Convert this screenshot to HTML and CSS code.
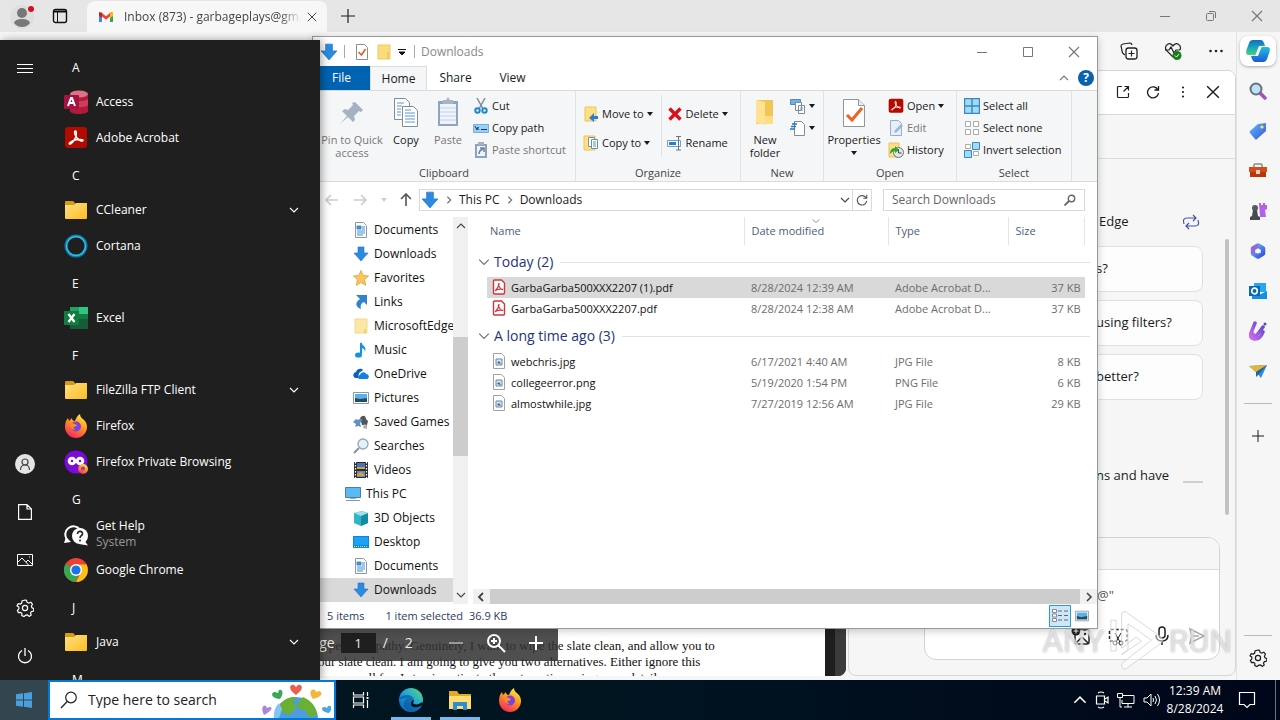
FILE: index.html
```html
<!DOCTYPE html>
<html lang="en">
<head>
<meta charset="utf-8">
<title>Desktop</title>
<link rel="stylesheet" href="styles.css">
</head>
<body>
<svg class="defs" aria-hidden="true">
  <defs>
    <linearGradient id="gFolder" x1="0" y1="0" x2="1" y2="1"><stop offset="0" stop-color="#ffe083"/><stop offset="1" stop-color="#fcbd1f"/></linearGradient>
    <linearGradient id="gFox" x1=".8" y1="0" x2=".3" y2="1"><stop offset="0" stop-color="#fff04a"/><stop offset=".45" stop-color="#ff9a1f"/><stop offset="1" stop-color="#f5245f"/></linearGradient>
    <linearGradient id="gEdge" x1="0" y1="1" x2="1" y2="0"><stop offset="0" stop-color="#0c59a4"/><stop offset=".5" stop-color="#1ba3df"/><stop offset="1" stop-color="#5fdc6e"/></linearGradient>
    <linearGradient id="gPurple" x1="0" y1="1" x2="1" y2="0"><stop offset="0" stop-color="#d56bef"/><stop offset="1" stop-color="#5547c8"/></linearGradient>
    <linearGradient id="gBlue" x1="0" y1="0" x2="1" y2="1"><stop offset="0" stop-color="#5bc0ff"/><stop offset="1" stop-color="#3c4fd8"/></linearGradient>
    <linearGradient id="gCop1" x1="0" y1="0" x2="0" y2="1"><stop offset="0" stop-color="#1769c4"/><stop offset=".5" stop-color="#17a8b8"/><stop offset="1" stop-color="#45d17b"/></linearGradient>
    <linearGradient id="gCop2" x1="0" y1="0" x2="0" y2="1"><stop offset="0" stop-color="#1fc0de"/><stop offset="1" stop-color="#1d5bd6"/></linearGradient>
  </defs>
  <symbol id="folder" viewBox="0 0 24 24"><path d="M1 4q0-1 1-1h7l2 2v4H1z" fill="#d49c14"/><path d="M1 7h9l2-2h11v15q0 1-1 1H2q-1 0-1-1z" fill="url(#gFolder)"/></symbol>
  <symbol id="access" viewBox="0 0 24 24"><path d="M6 4v17c0 4 18 4 18 0V4z" fill="#b3193a"/><ellipse cx="15" cy="4" rx="9" ry="3.500" fill="#e0718a"/><path d="M6 9c3 3 15 3 18 0v6c-3 3-15 3-18 0z" fill="#cf3d5c"/><rect y="5" width="15" height="14" rx="1" fill="#a4123f"/><path d="M4 16l3-8h1l3 8M5 13h5" fill="none" stroke="#fff" stroke-width="2"/></symbol>
  <symbol id="acrobat" viewBox="0 0 24 24"><rect x="1" y="1" width="22" height="21" rx="3" fill="#b30b00"/><path d="M11.500 5c-2 0-.5 4.500 1.500 7s5.500 4 6 2.500-6.500-1.500-9.500 0-5 3-4 3.500 4.500-2.500 6-6.500.8-6.500 0-6.500z" fill="none" stroke="#fff" stroke-width="1.500"/></symbol>
  <symbol id="cortana" viewBox="0 0 24 24"><circle cx="12" cy="12" r="10" fill="none" stroke="#1673a8" stroke-width="3"/><circle cx="12" cy="12" r="9.500" fill="none" stroke="#2bbfe0" stroke-width="1.500"/></symbol>
  <symbol id="excel" viewBox="0 0 24 24"><path d="M6 1h18v22H6z" fill="#21a366"/><path d="M15 1h9v7h-9z" fill="#33c481"/><path d="M15 12h9v11H6v-6h9z" fill="#185c37"/><path d="M15 8h9v5h-9z" fill="#107c41"/><rect y="5" width="15" height="14" fill="#107c41"/><path d="M4.500 8l6 8m0-8l-6 8" stroke="#fff" stroke-width="2.200"/></symbol>
  <symbol id="firefox" viewBox="0 0 24 24"><path d="M1 13C1 9 2 6 4 4l1 3 3-3c0 2 1 3 3 3 1-3 2-5 5-7 0 3 2 4 4 6 2 2 3 4 3 7a11 11 0 0 1-22 0z" fill="url(#gFox)"/><circle cx="12" cy="12.500" r="5" fill="#7b43d8"/><path d="M7 9c3 0 4 1 6 2-1 2-3 2-4 2l2 3c-3 0-6-3-4-7z" fill="#ff8a28"/></symbol>
  <symbol id="foxpriv" viewBox="0 0 24 24"><circle cx="12" cy="12" r="11.500" fill="#7a0bd8"/><g fill="none" stroke="#fff" stroke-width="3"><circle cx="8" cy="11" r="2.800"/><circle cx="16" cy="11" r="2.800"/></g><circle cx="19" cy="19" r="5" fill="url(#gFox)"/><circle cx="19" cy="18.500" r="2" fill="#8d3ec9"/></symbol>
  <symbol id="help" viewBox="0 0 24 24"><path d="M3 17.500a8 8 0 1 1 13-10" fill="none" stroke="#fff" stroke-width="2"/><circle cx="16" cy="14" r="8" fill="#fff"/><path d="M20 18l4 5.500-9-1.500z" fill="#fff"/><path d="M13.500 12c0-4 5.500-3 5 0-.3 2-2.500 1.500-2.500 4m0 1.500v2" fill="none" stroke="#222" stroke-width="1.600"/><path d="M2 15l-2 6 7-1z" fill="#fff"/></symbol>
  <symbol id="chrome" viewBox="0 0 24 24"><circle cx="12" cy="12" r="12" fill="#ea4335"/><path d="M1.600 6A12 12 0 0 0 11 24l5-9.500z" fill="#34a853"/><path d="M12 24A12 12 0 0 0 22.500 6.500H12l5 8z" fill="#fbc116"/><circle cx="12" cy="12" r="6" fill="#fff"/><circle cx="12" cy="12" r="4.600" fill="#1a73e8"/></symbol>
  <symbol id="chev" viewBox="0 0 10 10"><path d="M1 3l4 4 4-4" fill="none" stroke="currentColor" stroke-width="1.100"/></symbol>
  <symbol id="chevup" viewBox="0 0 10 10"><path d="M1 7l4-4 4 4" fill="none" stroke="currentColor" stroke-width="1.100"/></symbol>
  <symbol id="chevr" viewBox="0 0 10 10"><path d="M3 1l4 4-4 4" fill="none" stroke="currentColor" stroke-width="1.600"/></symbol>
  <symbol id="chevl" viewBox="0 0 10 10"><path d="M7 1L3 5l4 4" fill="none" stroke="currentColor" stroke-width="1.800"/></symbol>
  <symbol id="caret" viewBox="0 0 6 6"><path d="M0 1h6L3 5z" fill="currentColor"/></symbol>
  <symbol id="down" viewBox="0 0 16 16"><path d="M5 1h6v6h4l-7 8-7-8h4z" fill="#2c8ae2" stroke="#1a72c4" stroke-width=".6"/></symbol>
  <symbol id="doc" viewBox="0 0 16 16"><path d="M2.500.5h8l3 3v12h-11z" fill="#fff" stroke="#8b98a5"/><path d="M4 4h4v3H4zM9 5h3M9 7h3M4 9h8M4 11h8M4 13h6" fill="#3e8fd0" stroke="#3e8fd0"/></symbol>
  <symbol id="star" viewBox="0 0 16 16"><path d="M8 .5l2.200 5 5.300.5-4 3.700 1.200 5.600L8 12.500l-4.700 2.800L4.500 9.700.5 6l5.300-.5z" fill="#fcc65c" stroke="#e19a3c" stroke-width=".8"/></symbol>
  <symbol id="link" viewBox="0 0 16 16"><path d="M3 1h11v10l-3-3c-3 1-4 4-3 7-5-2-7-6-1-10z" fill="#2f83cf"/></symbol>
  <symbol id="fold" viewBox="0 0 16 16"><path d="M2 1h12v14H2z" fill="#fbe8a6" stroke="#f2d98a"/><path d="M12 11v4" stroke="#e3b94d"/></symbol>
  <symbol id="qfold" viewBox="0 0 16 16"><path d="M2 1h12v14H2z" fill="#fbdc7c" stroke="#f0c95e"/><path d="M12 8v7" stroke="#e3b94d"/></symbol>
  <symbol id="music" viewBox="0 0 16 16"><path d="M8 1v11" stroke="#1490e6" stroke-width="2"/><path d="M8 0c1 4 6 4 4 10 0-3-2-4-4-4z" fill="#1490e6"/><ellipse cx="5.500" cy="13" rx="3.500" ry="2.600" fill="#1490e6"/></symbol>
  <symbol id="cloud" viewBox="0 0 16 16"><path d="M1 11c-2-3 1-5 2-5 1-4 6-4 7-2l-4 3-1 5H2z" fill="#0b62b8"/><path d="M6 13c-2-1-1-4 1-4 1-4 6-3 6-1 3 0 4 4 1 5z" fill="#1482dc"/></symbol>
  <symbol id="pic" viewBox="0 0 16 16"><path d="M.5 2.500h15v11H.5z" fill="#fff" stroke="#8b98a5"/><path d="M2 4h12v5H2z" fill="#5ab0ec"/><path d="M2 8l5 1 7-1v4H2z" fill="#244d62"/></symbol>
  <symbol id="games" viewBox="0 0 16 16"><path d="M7 4c3-4 6-2 6 1l2 2-1 4H9z" fill="#4e575c"/><path d="M11 10l3 1v4l-4-1z" fill="#a9b2b8"/><path d="M0 8l3-3 2 1 3-2 1 3-2 2 1 4-3-1-3 1 1-3z" fill="#6391bd"/></symbol>
  <symbol id="loupe" viewBox="0 0 16 16"><circle cx="10" cy="6" r="5" fill="#e1f2fb" stroke="#99a7b3" stroke-width="1.300"/><path d="M6 10l-5 5" stroke="#87949d" stroke-width="2"/></symbol>
  <symbol id="video" viewBox="0 0 16 16"><path d="M1 0h14v16H1z" fill="#2d2d2d"/><path d="M4 1h8v6H4z" fill="#3f73c5"/><path d="M4 9h8v6H4z" fill="#658cd0"/><path d="M4 5h8v2H4zM4 12l4-2 4 4H4z" fill="#d3a52f"/><path d="M2.500 0v16M13.500 0v16" stroke="#fff" stroke-width="1.200" stroke-dasharray="1.500"/></symbol>
  <symbol id="pc" viewBox="0 0 16 16"><path d="M.5 1.500h15v10H.5z" fill="#5abaf7" stroke="#4b7f9f"/><path d="M5 12h6v1H5z" fill="#a0a8af"/><path d="M1 14.500h14" stroke="#7b9db5"/></symbol>
  <symbol id="cube" viewBox="0 0 16 16"><path d="M1 3l8-2 6 2v10l-7 3-7-3z" fill="#31b5c9"/><path d="M8 5l7-2v10l-7 3z" fill="#148ba4"/><path d="M1 3l8-2 6 2-7 3z" fill="#9ce3e9"/></symbol>
  <symbol id="desk" viewBox="0 0 16 16"><path d="M0 2h16v12H0z" fill="#0a85e4"/><path d="M1 3h14v8H1z" fill="#1da1f8"/><path d="M1 12.500h14" stroke="#bfe5ff" stroke-dasharray="1"/></symbol>
  <symbol id="pdf" viewBox="0 0 16 16"><path d="M2.500 2q0-1 1-1h7l3 3v10q0 1-1 1h-9q-1 0-1-1z" fill="#fff" stroke="#d2353b" stroke-width="1.400"/><path d="M8 4.500c-2 0 1.500 6.500 3.500 6s-4.500-.5-6 .5-1.500.8 0-.8 3-5.700 2.500-5.700z" fill="none" stroke="#d2353b" stroke-width="1.200"/></symbol>
  <symbol id="img" viewBox="0 0 16 16"><path d="M2.500.5h8l3 3v12h-11z" fill="#fff" stroke="#9aa3ab"/><path d="M5 6h6v6H5z" fill="#cfe6f7" stroke="#73879a"/><path d="M6 10l2-2 2 3z" fill="#315f91"/></symbol>
  <symbol id="check" viewBox="0 0 16 16"><path d="M2.500.5h8l3 3v12h-11z" fill="#fff" stroke="#8d8d8d"/><path d="M4.500 8l3 3 4-6" fill="none" stroke="#e2582c" stroke-width="1.600"/></symbol>
  <symbol id="bigfold" viewBox="0 0 32 32"><path d="M7 3h17v24H7z" fill="#f2c655"/><path d="M7 3l9 2v23l-9-2z" fill="#ffe293"/><path d="M16 19h8v8h-8z" fill="#ffdd84"/></symbol>
  <symbol id="pin" viewBox="0 0 32 32"><path d="M19 5l8 8-2 2-2-1-5 5 1 4-2 2-5-5-8 7 7-8-5-5 3-2 3 1 5-5-1-2z" fill="#a4b2c1"/></symbol>
  <symbol id="copy" viewBox="0 0 32 32"><g fill="#fff" stroke="#7f8b96"><path d="M4.500 1.500h11l4 4v17h-15z"/><path d="M12.500 9.500h11l4 4v16h-15z"/></g><path d="M7 6h7M7 9h5M7 12h4M7 15h4M7 18h4M15 16h10M15 19h10M15 22h10M15 25h10M15 13h6" stroke="#5698dc"/></symbol>
  <symbol id="paste" viewBox="0 0 32 32"><path d="M6 4h20v25H6z" fill="#91a3bd"/><path d="M8 7h16v20H8z" fill="#ecf3fb"/><path d="M8 11h16M8 15h16M8 19h16M8 23h16" stroke="#c3d2e5"/><path d="M11 3h3l2-3 2 3h3v4H11z" fill="#aab5c2"/></symbol>
  <symbol id="prop" viewBox="0 0 32 32"><path d="M5.500 2.500h15l6 6v21h-21z" fill="#fff" stroke="#8d979e"/><path d="M20.500 2.500v6h6" fill="#eee" stroke="#8d979e"/><path d="M9 18l5 5 10-12" fill="none" stroke="#ef6122" stroke-width="3"/></symbol>
  <symbol id="cut" viewBox="0 0 16 16"><path d="M4 0l6 11M12 0L6 11" stroke="#7d8d9c" stroke-width="1.500"/><g fill="none" stroke="#1f87c9" stroke-width="2"><circle cx="4.500" cy="12.500" r="2.200"/><circle cx="11.500" cy="12.500" r="2.200"/></g></symbol>
  <symbol id="path" viewBox="0 0 16 16"><path d="M.5 4.500h15v8H.5z" fill="#9bd0f4" stroke="#73aede"/><path d="M2 6l2 4 1-3 1 3M8 9.500h6" fill="none" stroke="#173a68" stroke-dasharray="9 1"/></symbol>
  <symbol id="pshort" viewBox="0 0 16 16"><path d="M2 2h12v14H2z" fill="#8fa2bb"/><path d="M4 4h8v10H4z" fill="#eff5fc"/><path d="M6 12c0-4 2-4 4-5M7 6h4v4" fill="none" stroke="#6883a7" stroke-width="1.500"/><path d="M5 0h6v3H5z" fill="#a5b1bf"/></symbol>
  <symbol id="move" viewBox="0 0 16 16"><path d="M2 1h11v14H2z" fill="#ffdf85" stroke="#ecc45a"/><path d="M15 10h-4V7l-5 5 5 4v-3h4z" fill="#2b7cd3"/></symbol>
  <symbol id="copyto" viewBox="0 0 16 16"><path d="M1 1h11v14H1z" fill="#ffdf85" stroke="#ecc45a"/><path d="M5.500 2.500h6v9h-6z" fill="#fff" stroke="#7e91aa"/><path d="M8.500 4.500h6v9h-6zM10 7h3M10 9h3M10 11h3" fill="#fff" stroke="#5c8fc8"/></symbol>
  <symbol id="del" viewBox="0 0 16 16"><path d="M2.500 2.500l11 11M13.500 2.500l-11 11" stroke="#d8121b" stroke-width="3.400"/></symbol>
  <symbol id="ren" viewBox="0 0 16 16"><path d="M.5 5.500h13v6H.5z" fill="#fff" stroke="#6f9fca"/><path d="M2 7h7v3H2z" fill="#1d83d5"/><path d="M9 1.500h5M9 15h5M11.500 1v14" stroke="#6b747c"/></symbol>
  <symbol id="newitem" viewBox="0 0 16 16"><path d="M.5 1.500h10v5H.5z" fill="#6fb4e8" stroke="#5b88ab"/><path d="M5.500 4.500h6v8h-6zM8.500 7.500h6v8h-6z" fill="#fff" stroke="#808b94"/><path d="M10 10h3M10 12h3" stroke="#6f9fd0"/></symbol>
  <symbol id="easy" viewBox="0 0 16 16"><path d="M4.500 1.500h7l3 3v11h-10z" fill="#fff" stroke="#808b94"/><path d="M2 4h5M1 6.500h5M0 9h5" stroke="#1d78cc" stroke-width="1.400"/></symbol>
  <symbol id="edit" viewBox="0 0 16 16"><path d="M2.500.5h8l3 3v12h-11z" fill="#e6eef8" stroke="#9aadc4"/><path d="M6 13l1-3 6-6 2 2-6 6z" fill="#9fb8d8"/></symbol>
  <symbol id="hist" viewBox="0 0 16 16"><path d="M1 1h10v14H1z" fill="#ffe084" stroke="#e8c25a"/><circle cx="10.500" cy="10.500" r="5" fill="#dfe5e8" stroke="#6d757b"/><path d="M10.500 7v4h3" fill="none" stroke="#444"/><path d="M2 12c0-4 2-6 5-6V4l4 4-4 3V9c-2 0-3 1-5 3z" fill="#35a335"/></symbol>
  <symbol id="selall" viewBox="0 0 16 16"><path d="M.5.5h15v15H.5zM8 0v16M0 8h16" fill="#9bdcff" stroke="#3d87bd" stroke-width="1.400"/></symbol>
  <symbol id="selnone" viewBox="0 0 16 16"><path d="M1.500 1.500h5v5h-5zM9.500 1.500h5v5h-5zM1.500 9.500h5v5h-5zM9.500 9.500h5v5h-5z" fill="#fff" stroke="#a7aaad"/></symbol>
  <symbol id="selinv" viewBox="0 0 16 16"><path d="M1.500 2.500h5v4h-5zM9.500 9.500h5v4h-5z" fill="#fff" stroke="#b9a79b"/><path d="M8.500.5h7v7h-7zM.5 8.500h7v7h-7z" fill="#9bdcff" stroke="#3d87bd"/></symbol>
  <symbol id="min" viewBox="0 0 12 12"><path d="M1 6.500h10" stroke="currentColor"/></symbol>
  <symbol id="max" viewBox="0 0 12 12"><path d="M1.500 1.500h9v9h-9z" fill="none" stroke="currentColor"/></symbol>
  <symbol id="restore" viewBox="0 0 12 12"><rect x="1.500" y="3.500" width="7" height="7" rx="1" fill="none" stroke="currentColor"/><path d="M4 1.500h5q1.500 0 1.500 1.500v5" fill="none" stroke="currentColor"/></symbol>
  <symbol id="x" viewBox="0 0 12 12"><path d="M1 1l10 10M11 1L1 11" stroke="currentColor" stroke-width="1.200"/></symbol>
  <symbol id="plus" viewBox="0 0 12 12"><path d="M6 0v12M0 6h12" stroke="currentColor"/></symbol>
  <symbol id="arrow" viewBox="0 0 14 14"><path d="M13 7H1M6 2L1 7l5 5" fill="none" stroke="currentColor" stroke-width="1.600"/></symbol>
  <symbol id="find" viewBox="0 0 12 12"><circle cx="7.500" cy="4.500" r="3.200" fill="none" stroke="currentColor" stroke-width="1.400"/><path d="M5 7l-4.500 4.500" stroke="currentColor" stroke-width="1.800"/></symbol>
  <symbol id="reload" viewBox="0 0 14 14"><path d="M12 5a5.500 5.500 0 1 0 .5 3M12.500 1v4h-4" fill="none" stroke="currentColor" stroke-width="1.300"/></symbol>
  <symbol id="gear" viewBox="0 0 18 18"><path d="M9 1l1.500.2.6 2.200 1.600.8 2.100-1 1.600 2-1 2 .6 1.600 1.900.9-.3 2.400-2.200.5-.9 1.400.7 2.100-2 1.300-1.700-1.400-1.700.2L8 17.500l-2.200-.9.100-2.200-1.300-1.100-2.200.2-1-2.200 1.500-1.500-.1-1.700L1 6.800l1.200-2.100 2.200.4 1.300-1L6 1.900z" fill="none" stroke="currentColor" stroke-width="1.200"/><circle cx="9" cy="9" r="2.600" fill="none" stroke="currentColor" stroke-width="1.200"/></symbol>
</svg>

<div class="desktop">
  <div class="browser">
    <header class="tabstrip">
      <button class="bare avatar" aria-label="Profile"><svg width="30" height="30" viewBox="0 0 30 30"><circle cx="15" cy="16" r="12" fill="#dedede"/><circle cx="15" cy="12" r="5" fill="#777"/><path d="M7 22q1-4 8-4t8 4q-3 4-8 4t-8-4z" fill="#777"/><circle cx="24" cy="8" r="3" fill="#d50f1c"/></svg></button>
      <button class="bare workspace" aria-label="Tab actions"><svg width="16" height="16" viewBox="0 0 16 16"><rect x="1.500" y="1.500" width="13" height="13" rx="2" fill="none" stroke="#111" stroke-width="1.400"/><path d="M1 2.500h14v2H1z" fill="#111"/><path d="M5.500 4v10" stroke="#111"/></svg></button>
      <div class="tab"><svg width="16" height="16" viewBox="0 0 16 16"><path d="M1 13V4l3 2v7z" fill="#4285f4"/><path d="M12 13V6l3-2v9z" fill="#34a853"/><path d="M2 4l6 5 6-5" fill="none" stroke="#ea4335" stroke-width="2.600"/><path d="M1 3v4l3 2V4z" fill="#c5221f"/><path d="M15 3v4l-3 2V4z" fill="#fbbc04"/></svg><span class="tab-name">Inbox (873) - garbageplays@gma</span><button class="bare" aria-label="Close tab"><svg width="10" height="10"><use href="#x"/></svg></button></div>
      <button class="bare newtab" aria-label="New tab"><svg width="14" height="14"><use href="#plus"/></svg></button>
      <div class="winbtns"><button class="bare" aria-label="Minimize"><svg width="12" height="12"><use href="#min"/></svg></button><button class="bare" aria-label="Restore"><svg width="12" height="12"><use href="#restore"/></svg></button><button class="bare" aria-label="Close"><svg width="12" height="12"><use href="#x"/></svg></button></div>
    </header>
    <div class="browser-body">
      <div class="browser-main">
        <div class="toolbar">
          <button class="bare" aria-label="Collections"><svg width="18" height="18" viewBox="0 0 18 18"><path d="M5 13L2.500 11 1 4q0-1.500 2-2l7-1q1.500 0 2 2" fill="none" stroke="#222" stroke-width="1.200"/><rect x="6" y="6" width="11" height="11" rx="2.500" fill="#fff" stroke="#222" stroke-width="1.300"/><path d="M11.500 8.500v6M8.500 11.500h6" stroke="#222" stroke-width="1.200"/></svg></button>
          <button class="bare" aria-label="Browser essentials"><svg width="18" height="18" viewBox="0 0 18 18"><path d="M9 15L2 8C0 3 6-1 9 4c3-5 9-1 7 4" fill="none" stroke="#222" stroke-width="1.200"/><path d="M1 8h4l2-3 3 6 2-3h4" fill="none" stroke="#222" stroke-width="1.200"/><circle cx="13" cy="13.500" r="4.500" fill="#13801a"/><path d="M11 13.500l1.500 1.500 2.500-3" fill="none" stroke="#fff"/></svg></button>
          <button class="bare" aria-label="More"><svg width="16" height="16" viewBox="0 0 16 16"><g fill="#222"><circle cx="2.500" cy="8" r="1.300"/><circle cx="8" cy="8" r="1.300"/><circle cx="13.500" cy="8" r="1.300"/></g></svg></button>
        </div>
        <div class="panes">
          <main class="viewer">
            <div class="paper">
              <p>espect sympathy. Genuinely, I want to wipe the slate clean, and allow you to<br>our slate clean. I am going to give you two alternatives. Either ignore this<br><span class="indent">e call for. I stay in activate the automation using your details</span></p>
              <div class="pdfbar"><label for="pg">Page</label><input id="pg" value="1"><span>/</span><span>2</span><i></i>
                <button class="bare" aria-label="Zoom out"><svg width="14" height="14" viewBox="0 0 14 14"><path d="M0 7h14" stroke="#999" stroke-width="2"/></svg></button>
                <button class="bare" aria-label="Zoom"><svg width="20" height="20" viewBox="0 0 20 20"><circle cx="8" cy="8" r="6" fill="none" stroke="#fff" stroke-width="2"/><path d="M12.500 12.500L19 19M8 5v6M5 8h6" stroke="#fff" stroke-width="2"/></svg></button>
                <button class="bare" aria-label="Zoom in"><svg width="14" height="14" viewBox="0 0 14 14"><path d="M0 7h14M7 0v14" stroke="#fff" stroke-width="2"/></svg></button></div>
            </div>
            <div class="viewer-edge"></div>
          </main>
          <aside class="copilot">
            <div class="cp-head">
              <button class="bare" aria-label="Open in new tab"><svg width="14" height="14" viewBox="0 0 14 14"><path d="M6 1.500H2.500q-1 0-1 1v9q0 1 1 1h9q1 0 1-1V8M8.500 1.500h4v4M12.500 1.500l-5 5" fill="none" stroke="#222" stroke-width="1.200"/></svg></button>
              <button class="bare" aria-label="Refresh"><svg width="14" height="14"><use href="#reload"/></svg></button>
              <button class="bare" aria-label="Options"><svg width="14" height="14" viewBox="0 0 14 14"><g fill="#222"><circle cx="7" cy="2.500" r="1.100"/><circle cx="7" cy="7" r="1.100"/><circle cx="7" cy="11.500" r="1.100"/></g></svg></button>
              <button class="bare" aria-label="Close pane"><svg width="14" height="14"><use href="#x"/></svg></button>
            </div>
            <div class="cp-sub"></div>
            <div class="cp-body">
              <div class="cp-title"><span>Edge</span><button class="bare" aria-label="Swap suggestions"><svg width="18" height="16" viewBox="0 0 18 16"><path d="M2 10Q0 4 5 4h9M11 1l3 3-3 3M16 6q2 6-3 6H4M7 9l-3 3 3 3" fill="none" stroke="#4252b5" stroke-width="1.200"/></svg></button></div>
              <button class="card">s?</button><button class="card">using filters?</button><button class="card">better?</button>
              <p class="cp-note">ns and have<i></i></p>
              <div class="thumb"></div>
            </div>
            <div class="composer">
              <div class="comp-top"></div>
              <div class="comp-text">@"</div>
              <div class="comp-tools">
                <button class="bare" aria-label="Add image"><svg width="20" height="20" viewBox="0 0 20 20"><rect x="4" y="4" width="14" height="14" rx="2" fill="none" stroke="#222" stroke-width="1.500"/><path d="M5 17l5-5q1-1 2 0l5 5" fill="none" stroke="#222" stroke-width="1.500"/><circle cx="14" cy="8" r="1.200" fill="#222"/><circle cx="5" cy="5" r="4.500" fill="#222"/><path d="M5 2.500v5M2.500 5h5" stroke="#fff"/></svg></button>
                <button class="bare" aria-label="Screenshot"><svg width="20" height="20" viewBox="0 0 20 20"><path d="M5 15H2.500q-1 0-1-1V5q0-1.500 1-1.500h15q1.500 0 1.500 1.500v9q0 1-1.500 1H15" fill="none" stroke="#222" stroke-width="1.500" stroke-dasharray="3 2"/><path d="M7 7l5 9M13 7l-5 9" stroke="#222"/><g fill="none" stroke="#222"><circle cx="7" cy="17" r="2"/><circle cx="13" cy="17" r="2"/></g></svg></button>
                <button class="bare" aria-label="Microphone"><svg width="18" height="20" viewBox="0 0 18 20"><rect x="6" y="1" width="6" height="11" rx="3" fill="none" stroke="#222" stroke-width="1.500"/><path d="M3 9q0 6 6 6t6-6M9 15v4" fill="none" stroke="#222" stroke-width="1.500"/></svg></button>
                <button class="bare" aria-label="Send"><svg width="18" height="18" viewBox="0 0 18 18"><path d="M2 2l14 7-14 7 2-7zM4 9h7" fill="none" stroke="#aaa" stroke-width="1.500"/></svg></button>
              </div>
            </div>
          </aside>
        </div>
      </div>
      <nav class="sidebar" aria-label="Sidebar">
        <button class="bare copbtn" aria-label="Copilot"><svg width="26" height="26" viewBox="0 0 26 26"><path d="M8 2h8q2 0 3 3l1 3h-3q-2 0-3 3l-2 6H4Q0 17 1.500 12L4 5q1-3 4-3z" fill="url(#gCop1)"/><path d="M18 24h-8q-2 0-3-3l-1-3h3q2 0 3-3l2-6h8q4 0 2.500 5L22 21q-1 3-4 3z" fill="url(#gCop2)"/><path d="M14 8h3l-4 10h-3z" fill="#fff"/></svg></button>
        <button class="bare" aria-label="Search"><svg width="18" height="18" viewBox="0 0 18 18"><path d="M11 11l5 5" stroke="#a34fd0" stroke-width="3.500" stroke-linecap="round"/><circle cx="7" cy="7" r="5.500" fill="#b9e3fb" stroke="#6c7076" stroke-width="2"/></svg></button>
        <button class="bare" aria-label="Shopping"><svg width="18" height="18" viewBox="0 0 18 18"><path d="M1 9l8-7 8-1v8l-9 8q-1 1-2 0l-5-6q-1-1 0-2z" fill="url(#gBlue)"/><circle cx="13" cy="5" r="1.600" fill="#ffe26a"/></svg></button>
        <button class="bare" aria-label="Tools"><svg width="18" height="18" viewBox="0 0 18 18"><path d="M5 5V3q0-1 1-1h6q1 0 1 1v2" fill="none" stroke="#8d8c8a" stroke-width="1.500"/><path d="M0 5h18v5H0z" fill="#d44b1c"/><path d="M1 10h16v5H1z" fill="#b9370f"/><path d="M7 8h4v4H7z" fill="#e7d3c5"/></svg></button>
        <button class="bare" aria-label="Games"><svg width="18" height="18" viewBox="0 0 18 18"><path d="M10 1h2v2h2V1h2v2h2v4l-2 1 1 7h-6z" fill="#b461ea"/><circle cx="6" cy="6" r="3" fill="#565a5e"/><path d="M4 8h4l1 6 2 1v3H1v-3l2-1z" fill="#484b4e"/></svg></button>
        <button class="bare" aria-label="Microsoft 365"><svg width="18" height="18" viewBox="0 0 18 18"><path d="M9 3.500l5 3v5l-5 3-5-3v-5z" fill="none" stroke="url(#gBlue)" stroke-width="4.500" stroke-linejoin="round"/><path d="M4 11.500v-5l5-3" fill="none" stroke="#9b65d8" stroke-width="4"/></svg></button>
        <button class="bare" aria-label="Outlook"><svg width="18" height="18" viewBox="0 0 18 18"><path d="M5 1h12v9H5z" fill="#28a8ea"/><path d="M3 9l7 4 8-4v8H3z" fill="#1490df"/><rect y="4" width="11" height="10" fill="#0767b8"/><circle cx="5.500" cy="9" r="2.800" fill="none" stroke="#fff" stroke-width="1.700"/></svg></button>
        <button class="bare" aria-label="Designer"><svg width="18" height="20" viewBox="0 0 18 20"><path d="M6 2L2 12q-2 5 3 6 6 1 9-7M4 13q1 3 4 1l6-8" fill="none" stroke="url(#gPurple)" stroke-width="3.500" stroke-linecap="round"/><circle cx="16" cy="3" r="1.500" fill="#5547c8"/></svg></button>
        <button class="bare" aria-label="Drop"><svg width="18" height="16" viewBox="0 0 18 16"><path d="M0 3l18-1-6 13-4-5z" fill="#2b8de0"/><path d="M0 3l18-1L7 9z" fill="#e7b532"/><path d="M18 2L7 9v5l3-3z" fill="#20659c"/></svg></button>
        <hr>
        <button class="bare" aria-label="Customize"><svg width="12" height="12"><use href="#plus"/></svg></button>
        <div class="spring"></div><hr>
        <button class="bare" aria-label="Settings"><svg width="18" height="18"><use href="#gear"/></svg></button>
      </nav>
    </div>
  </div>

  <section class="explorer" aria-label="Downloads">
    <header class="ex-title"><svg width="18" height="18"><use href="#down"/></svg><i></i><svg width="16" height="16"><use href="#check"/></svg><svg width="16" height="16"><use href="#qfold"/></svg><svg width="8" height="8" viewBox="0 0 8 8"><path d="M0 1.500h8M1 4h6L4 7z" stroke="#111" fill="#111"/></svg><i></i><span>Downloads</span>
      <div class="winbtns"><button class="bare" aria-label="Minimize"><svg width="12" height="12"><use href="#min"/></svg></button><button class="bare" aria-label="Maximize"><svg width="12" height="12"><use href="#max"/></svg></button><button class="bare" aria-label="Close"><svg width="12" height="12"><use href="#x"/></svg></button></div></header>
    <div class="ex-tabs"><button class="file">File</button><button class="on">Home</button><button>Share</button><button>View</button><span class="spring"></span><svg width="10" height="10" class="dim"><use href="#chevup"/></svg><button class="helpbtn" aria-label="Help">?</button></div>
    <div class="ribbon">
      <div class="group g-clip"><div class="gbody"><button class="big w-pin off"><svg width="32" height="32"><use href="#pin"/></svg>Pin to Quick<br>access</button><button class="big w-std"><svg width="32" height="32"><use href="#copy"/></svg>Copy</button><button class="big w-std off"><svg width="32" height="32"><use href="#paste"/></svg>Paste</button>
        <div class="smalls"><button><svg><use href="#cut"/></svg>Cut</button><button><svg><use href="#path"/></svg>Copy path</button><button class="off"><svg><use href="#pshort"/></svg>Paste shortcut</button></div></div><div class="glabel">Clipboard</div></div>
      <div class="group g-org"><div class="gbody"><div class="smalls tall"><button><svg><use href="#move"/></svg>Move to<svg class="car"><use href="#caret"/></svg></button><button><svg><use href="#copyto"/></svg>Copy to<svg class="car"><use href="#caret"/></svg></button></div><div class="smalls tall line"><button><svg><use href="#del"/></svg>Delete<svg class="car"><use href="#caret"/></svg></button><button><svg><use href="#ren"/></svg>Rename</button></div></div><div class="glabel">Organize</div></div>
      <div class="group g-new"><div class="gbody"><button class="big w-std"><svg width="32" height="32"><use href="#bigfold"/></svg>New<br>folder</button><div class="smalls"><button aria-label="New item"><svg><use href="#newitem"/></svg><svg class="car"><use href="#caret"/></svg></button><button aria-label="Easy access"><svg><use href="#easy"/></svg><svg class="car"><use href="#caret"/></svg></button></div></div><div class="glabel">New</div></div>
      <div class="group g-open"><div class="gbody"><button class="big w-prop"><svg width="32" height="32"><use href="#prop"/></svg>Properties<svg class="car"><use href="#caret"/></svg></button><div class="smalls"><button><svg><use href="#acrobat"/></svg>Open<svg class="car"><use href="#caret"/></svg></button><button class="off"><svg><use href="#edit"/></svg>Edit</button><button><svg><use href="#hist"/></svg>History</button></div></div><div class="glabel">Open</div></div>
      <div class="group g-sel"><div class="gbody"><div class="smalls"><button><svg><use href="#selall"/></svg>Select all</button><button><svg><use href="#selnone"/></svg>Select none</button><button><svg><use href="#selinv"/></svg>Invert selection</button></div></div><div class="glabel">Select</div></div>
    </div>
    <div class="address">
      <div class="arrows"><svg width="14" height="14" class="faint"><use href="#arrow"/></svg><svg width="14" height="14" class="faint flip"><use href="#arrow"/></svg><svg width="6" height="6" class="faint"><use href="#caret"/></svg><svg width="14" height="14" class="up"><use href="#arrow"/></svg></div>
      <div class="crumbs"><svg width="18" height="18"><use href="#down"/></svg><svg width="8" height="8" class="dim"><use href="#chevr"/></svg><a href="#pc">This PC</a><svg width="8" height="8" class="dim"><use href="#chevr"/></svg><a href="#dl">Downloads</a><span class="spring"></span><svg width="10" height="10" class="dark"><use href="#chev"/></svg><button class="bare reload" aria-label="Refresh"><svg width="12" height="12"><use href="#reload"/></svg></button></div>
      <label class="search"><input placeholder="Search Downloads" aria-label="Search Downloads"><svg width="12" height="12"><use href="#find"/></svg></label>
    </div>
    <div class="ex-body">
      <nav class="tree" aria-label="Folders">
        <a href="#n"><svg><use href="#doc"/></svg>Documents</a><a href="#n"><svg><use href="#down"/></svg>Downloads</a><a href="#n"><svg><use href="#star"/></svg>Favorites</a><a href="#n"><svg><use href="#link"/></svg>Links</a><a href="#n"><svg><use href="#fold"/></svg>MicrosoftEdge</a><a href="#n"><svg><use href="#music"/></svg>Music</a><a href="#n"><svg><use href="#cloud"/></svg>OneDrive</a><a href="#n"><svg><use href="#pic"/></svg>Pictures</a><a href="#n"><svg><use href="#games"/></svg>Saved Games</a><a href="#n"><svg><use href="#loupe"/></svg>Searches</a><a href="#n"><svg><use href="#video"/></svg>Videos</a><a href="#n" class="top"><svg><use href="#pc"/></svg>This PC</a><a href="#n"><svg><use href="#cube"/></svg>3D Objects</a><a href="#n"><svg><use href="#desk"/></svg>Desktop</a><a href="#n"><svg><use href="#doc"/></svg>Documents</a><a href="#n" class="cur"><svg><use href="#down"/></svg>Downloads</a>
      </nav>
      <div class="vscroll"><svg width="10" height="10"><use href="#chevup"/></svg><div></div><svg width="10" height="10"><use href="#chev"/></svg></div>
      <div class="files">
        <table>
          <colgroup><col class="c-name"><col class="c-date"><col class="c-type"><col></colgroup>
          <thead><tr><th>Name</th><th><svg class="sort" width="8" height="8"><use href="#chev"/></svg>Date modified</th><th>Type</th><th>Size</th></tr></thead>
          <tbody>
            <tr class="grp"><td colspan="4"><div><svg width="12" height="12"><use href="#chev"/></svg>Today (2)<i></i></div></td></tr>
            <tr class="sel"><td><svg><use href="#pdf"/></svg>GarbaGarba500XXX2207 (1).pdf</td><td>8/28/2024 12:39 AM</td><td>Adobe Acrobat D...</td><td>37 KB</td></tr>
            <tr><td><svg><use href="#pdf"/></svg>GarbaGarba500XXX2207.pdf</td><td>8/28/2024 12:38 AM</td><td>Adobe Acrobat D...</td><td>37 KB</td></tr>
            <tr class="grp"><td colspan="4"><div><svg width="12" height="12"><use href="#chev"/></svg>A long time ago (3)<i></i></div></td></tr>
            <tr><td><svg><use href="#img"/></svg>webchris.jpg</td><td>6/17/2021 4:40 AM</td><td>JPG File</td><td>8 KB</td></tr>
            <tr><td><svg><use href="#img"/></svg>collegeerror.png</td><td>5/19/2020 1:54 PM</td><td>PNG File</td><td>6 KB</td></tr>
            <tr><td><svg><use href="#img"/></svg>almostwhile.jpg</td><td>7/27/2019 12:56 AM</td><td>JPG File</td><td>29 KB</td></tr>
          </tbody>
        </table>
        <div class="hscroll"><svg width="10" height="10"><use href="#chevl"/></svg><div></div><svg width="10" height="10"><use href="#chevr"/></svg></div>
      </div>
    </div>
    <footer class="status"><span>5 items</span><span>1 item selected</span><span>36.9 KB</span><span class="spring"></span><button class="view on" aria-label="Details"><svg width="16" height="14" viewBox="0 0 16 14"><path d="M.5.5h4v3h-4zM.5 5h4v3h-4zM.5 9.500h4v3h-4z" fill="#fff" stroke="#889"/><path d="M6 2h10M6 6.500h10M6 11h10" stroke="#667" stroke-dasharray="4 2"/></svg></button><button class="view" aria-label="Thumbnails"><svg width="14" height="14"><use href="#pic"/></svg></button></footer>
  </section>

  <section class="start" aria-label="Start">
    <nav class="rail">
      <button class="bare" aria-label="Menu"><svg width="16" height="10" viewBox="0 0 16 10"><path d="M0 .5h16M0 4.500h16M0 8.500h16" stroke="#fff"/></svg></button>
      <div class="spring"></div>
      <button class="bare" aria-label="Account"><svg width="20" height="20" viewBox="0 0 20 20"><circle cx="10" cy="10" r="10" fill="#e4e4e4"/><circle cx="10" cy="8" r="3" fill="none" stroke="#444" stroke-width="1.200"/><path d="M5.500 16q0-5 4.500-5t4.500 5" fill="none" stroke="#444" stroke-width="1.200"/></svg></button>
      <button class="bare" aria-label="Documents"><svg width="14" height="16" viewBox="0 0 14 16"><path d="M.6.6h8.400l4.400 4.400v10.400H.6zM9 .6V5h4.400" fill="none" stroke="#fff" stroke-width="1.200"/></svg></button>
      <button class="bare" aria-label="Pictures"><svg width="16" height="12" viewBox="0 0 16 12"><path d="M.5.5h15v11H.5zM1 8l4-4 6.500 7M9 8l2-2 4 4" fill="none" stroke="#fff"/><path d="M12 3h1" stroke="#fff"/></svg></button>
      <button class="bare" aria-label="Settings"><svg width="18" height="18"><use href="#gear"/></svg></button>
      <button class="bare" aria-label="Power"><svg width="16" height="16" viewBox="0 0 16 16"><path d="M5 2.500a6.500 6.500 0 1 0 6 0M8 0v8" fill="none" stroke="#fff" stroke-width="1.300"/></svg></button>
    </nav>
    <div class="apps">
      <h2>A</h2><a href="#a"><svg><use href="#access"/></svg>Access</a><a href="#a"><svg><use href="#acrobat"/></svg>Adobe Acrobat</a>
      <h2>C</h2><a href="#a"><svg><use href="#folder"/></svg>CCleaner<svg class="exp"><use href="#chev"/></svg></a><a href="#a"><svg><use href="#cortana"/></svg>Cortana</a>
      <h2>E</h2><a href="#a"><svg><use href="#excel"/></svg>Excel</a>
      <h2>F</h2><a href="#a"><svg><use href="#folder"/></svg>FileZilla FTP Client<svg class="exp"><use href="#chev"/></svg></a><a href="#a"><svg><use href="#firefox"/></svg>Firefox</a><a href="#a"><svg><use href="#foxpriv"/></svg>Firefox Private Browsing</a>
      <h2>G</h2><a href="#a"><svg><use href="#help"/></svg><span>Get Help<small>System</small></span></a><a href="#a"><svg><use href="#chrome"/></svg>Google Chrome</a>
      <h2>J</h2><a href="#a"><svg><use href="#folder"/></svg>Java<svg class="exp"><use href="#chev"/></svg></a>
      <h2>M</h2>
    </div>
  </section>

  <div class="watermark" aria-hidden="true"><span>ANY</span><svg width="56" height="70" viewBox="0 0 62 70"><g fill="#fff" fill-opacity=".5" stroke="#c4c4c4" stroke-opacity=".7"><path d="M14 6q0-5 5-3l38 27q5 4 0 8L20 65q-5 3-6-2v-3l33-26-26-18v22l-7 5z"/><path d="M2 12h6v34H2z"/><path d="M14 50l7-5v-8l9-6 6 4z"/></g></svg><span>RUN</span></div>

  <footer class="taskbar">
    <button class="bare winkey" aria-label="Start"><svg width="16" height="16" viewBox="0 0 16 16"><path d="M0 2.300L7 1.300V7.500H0zM8 1.200L16 0v7.500H8zM0 8.500h7v6.200l-7-1zM8 8.500h8V16l-8-1.200z" fill="#4a9fdd"/></svg></button>
    <label class="tasksearch"><svg width="18" height="18" viewBox="0 0 18 18"><circle cx="11" cy="6.500" r="5.300" fill="none" stroke="#222" stroke-width="1.200"/><path d="M7.200 10.500L1 17" stroke="#222" stroke-width="1.300"/></svg><input placeholder="Type here to search" aria-label="Type here to search"><svg width="70" height="36" viewBox="0 0 70 36"><circle cx="35" cy="37" r="22" fill="#4f9de0"/><path d="M19 22q7-8 16-7l-3 6 4 4-8 8-7-3zM36 22l6-7q12 5 14 17l-7 4-5-8-6-1z" fill="#69b033"/><path d="M13 36q-1-9 5-15l3 6-3 9z" fill="#85c4f2"/><path d="M35 13c-9-6-6-11-2-10l2 2 2-2c4-1 7 4-2 10z" fill="#ed5f4d"/><path d="M19 17c-10-1-9-7-5-7l3 1 1-3c4-1 5 4 1 9z" fill="#39a852"/><path d="M52 17c-5-6-2-11 2-9l1 2 3-1c4 1 4 6-6 8z" fill="#f5b63a"/><path d="M3 33c-4-8 0-11 2-9l1 2c5-3 8 1-3 7z" fill="#a989d4"/><path d="M68 31c-9-1-8-7-4-6l2 1 1-2c4-1 5 3 1 7z" fill="#4ca7dd"/></svg></label>
    <button class="bare task" aria-label="Task view"><svg width="18" height="16" viewBox="0 0 18 16"><path d="M1.500 0v3h10V0M1.500 5h10v6h-10zM1.500 16v-3h10v3M15.500 0v4M15.500 8v8" fill="none" stroke="#fff" stroke-width="1.200"/><path d="M14.500 5h2v2h-2z" fill="#fff"/></svg></button>
    <button class="bare task run" aria-label="Edge"><svg width="24" height="24" viewBox="0 0 24 24"><circle cx="12" cy="12" r="12" fill="url(#gEdge)"/><path d="M0 11c4-6 14-5 15 1 0 2-3 3-2 5 2 3 8 2 10 0-3 9-16 9-18 1-1-5 2-8 6-8" fill="#0b4f9a" opacity=".6"/><path d="M14 12c2 1 0 2 0 3 1 2 6 2 9-1l1 2c-4 5-13 4-12-1 0-1 1-2 2-3z" fill="#00131d"/></svg></button>
    <button class="bare task run" aria-label="File Explorer"><svg width="24" height="24" viewBox="0 0 24 24"><path d="M1 3h8l2 3h12v15H1z" fill="#e6a91e"/><path d="M1 8h22v13H1z" fill="#ffdc74"/><path d="M5 14h14v8h-4v-4H9v4H5z" fill="#2e8dd2"/></svg></button>
    <button class="bare task last" aria-label="Firefox"><svg width="24" height="24"><use href="#firefox"/></svg></button>
    <span class="spring"></span>
    <div class="tray">
      <svg width="14" height="14"><use href="#chevup"/></svg>
      <svg width="14" height="18" viewBox="0 0 14 18"><path d="M1.500 5h8v8h-8zM10 8l3-2v6l-3-2M3 2q3-2 6 0M3 16q3 2 6 0" fill="none" stroke="#fff" stroke-width="1.200"/></svg>
      <svg width="18" height="16" viewBox="0 0 18 16"><path d="M6 3.500h11v8H5V8M11 12v3M7 15h8M.5 1.500h5v4h-5zM3 6v9h2" fill="none" stroke="#fff"/></svg>
      <svg width="18" height="16" viewBox="0 0 18 16"><path d="M1 6h3l4-4v12L4 10H1zM10 6q1 2 0 4M12 4q3 4 0 8M14.500 2q4 6 0 12" fill="none" stroke="#fff"/></svg>
    </div>
    <time class="clock">12:39 AM<br>8/28/2024</time>
    <button class="bare notif" aria-label="Notifications"><svg width="18" height="18" viewBox="0 0 18 18"><path d="M1.500 1.500h15v12H12l-3 3-3-3H1.500z" fill="none" stroke="#fff" stroke-width="1.200"/></svg></button>
    <div class="peek"></div>
  </footer>
</div>
</body>
</html>
```

FILE: styles.css
```css
* { box-sizing: border-box; }
body { margin: 0; font: 12px/16px "Open Sans", "Noto Sans", sans-serif; color: #1a1a1a; }
.defs { position: absolute; width: 0; height: 0; }
svg { flex: none; display: block; }
button, input { font: inherit; color: inherit; }
button { border: 0; background: none; padding: 0; margin: 0; }
a { color: inherit; text-decoration: none; }
.bare { display: flex; align-items: center; justify-content: center; }
.spring { flex: 1; }
.desktop { position: relative; height: 100vh; overflow: hidden; display: flex; flex-direction: column; background: #001520; }

/* Browser */
.browser { flex: 1; min-height: 0; display: flex; flex-direction: column; background: #f6f6f6; }
.tabstrip { height: 32px; flex: none; display: flex; align-items: center; background: #e6e6e6; }
.avatar { margin-left: 7px; }
.workspace { margin: 0 19px 0 15px; }
.tab { width: 240px; align-self: stretch; margin-top: 1px; border-radius: 8px 8px 0 0; background: #f7f7f7; display: flex; align-items: center; padding: 0 10px 0 11px; gap: 10px; color: #444; }
.tab .bare { margin-left: -4px; }
.tab-name { flex: 1; white-space: nowrap; overflow: hidden; -webkit-mask-image: linear-gradient(90deg, #000 88%, transparent); mask-image: linear-gradient(90deg, #000 88%, transparent); }
.newtab { margin-left: 14px; }
.winbtns { margin-left: auto; display: flex; align-self: stretch; color: #777; }
.winbtns .bare { width: 46px; }
.browser-body { flex: 1; min-height: 0; display: flex; }
.browser-main { flex: 1; min-width: 0; display: flex; flex-direction: column; padding-bottom: 4px; }
.toolbar { height: 38px; flex: none; display: flex; justify-content: flex-end; align-items: center; padding-right: 12px; gap: 26px; }
.panes { flex: 1; min-height: 0; display: flex; gap: 2px; }
.viewer { flex: 1; min-width: 0; display: flex; overflow: hidden; border-radius: 0 8px 8px 0; background: #3b3b3b; }
.paper { position: relative; flex: 1; background: #fff; display: flex; align-items: flex-end; overflow: hidden; }
.paper p { margin: 0 0 -10px 318px; font: 13px/16px "Liberation Serif", serif; white-space: nowrap; color: #111; }
.indent { padding-left: 30px; }
.pdfbar { position: absolute; left: 0; bottom: 15px; width: 558px; height: 38px; display: flex; align-items: center; background: rgba(50, 50, 50, .86); color: #e8e8e8; font-size: 14px; padding: 1px 0 0 303px; }
.pdfbar input { width: 35px; height: 20px; margin: 0 7px 0 6px; border: 0; background: #1f1f1f; text-align: center; font-size: 13px; padding: 0; }
.pdfbar span { margin-right: 17px; }
.pdfbar i { width: 1px; height: 28px; background: #666; margin: 0 16px 0 3px; }
.pdfbar .bare { margin-right: 23px; }
.viewer-edge { width: 21px; background: #3b3b3b; border-left: 10px solid #1e1e1e; }
.copilot { width: 388px; display: flex; flex-direction: column; border: 1px solid #d6d6d6; border-radius: 8px; background: #f6f6f6; font-size: 13px; overflow: hidden; }
.cp-head { height: 44px; flex: none; display: flex; justify-content: flex-end; align-items: center; background: #fff; border-bottom: 1px solid #d8d8d8; padding: 0 15px 1px 0; gap: 16px; }
.cp-sub { height: 44px; flex: none; border-bottom: 1px solid #dcdcdc; }
.cp-body { position: relative; flex: 1; min-height: 0; display: flex; flex-direction: column; padding: 52px 32px 0 20px; gap: 8px; }
.cp-title { display: flex; justify-content: space-between; height: 27px; padding: 2px 3px 0 230px; }
.cp-title .bare { height: 18px; }
.card { height: 46px; flex: none; border: 1px solid #e0e0e0; border-radius: 8px; background: #fdfdfd; text-align: left; padding: 0 0 2px 226px; }
.cp-note { margin: 59px 0 0; padding-left: 227px; display: flex; justify-content: space-between; align-items: flex-end; }
.cp-note i { width: 20px; height: 2px; background: #d0d0d0; }
.thumb { position: absolute; right: 6px; top: 80px; width: 4px; height: 276px; border-radius: 2px; background: #c2c2c2; }
.composer { height: 123px; flex: none; margin: 0 15px 15px 75px; border: 1px solid #d2d2d2; border-radius: 12px; background: #fff; display: flex; flex-direction: column; overflow: hidden; }
.comp-top { height: 32px; background: #f6f6f6; border-bottom: 1px solid #ddd; }
.comp-text { flex: 1; padding: 17px 0 0 172px; color: #555; }
.comp-tools { height: 45px; display: flex; justify-content: flex-end; align-items: center; padding: 0 13px 2px 0; gap: 17px; }
.comp-tools .bare:nth-child(3) { margin-left: 8px; }
.sidebar { width: 44px; flex: none; display: flex; flex-direction: column; align-items: center; border-left: 1px solid #e2e2e2; padding: 0 2px 2px 0; }
.sidebar .bare { height: 40px; width: 36px; flex: none; }
.sidebar .copbtn { height: 30px; margin: 4px 0 5px; border-radius: 8px; background: #fff; box-shadow: 0 1px 3px #aaa; }
.sidebar hr { width: 28px; border: 0; border-top: 1px solid #bbb; margin: 12px 0; }
.sidebar .spring + hr { margin: 0 0 2px; }

/* File explorer */
.explorer { position: absolute; left: 312px; right: 182px; top: 36px; bottom: 91px; display: flex; flex-direction: column; background: #fff; border: 1px solid #999; font-size: 11px; box-shadow: 0 2px 8px rgba(0, 0, 0, .2); }
.ex-title { height: 29px; flex: none; display: flex; align-items: center; padding-left: 7px; gap: 6px; color: #888; font-size: 12px; }
.ex-title i { width: 1px; height: 13px; background: #aaa; margin: 0 3px 0 0; }
.ex-title i:last-of-type { margin: 0 0 0 2px; }
.ex-tabs { height: 24px; flex: none; display: flex; align-items: center; padding-right: 3px; }
.ex-tabs button { width: 57px; height: 24px; font-size: 12px; }
.ex-tabs .file { background: #0063b1; color: #fff; }
.ex-tabs .on { background: #f5f6f7; border: 1px solid #ddd; border-bottom: 0; }
.ex-tabs .helpbtn { width: 16px; height: 16px; margin-left: 9px; border-radius: 50%; background: #0a62ae; color: #fff; font-weight: 700; line-height: 16px; }
.dim { color: #777; }
.faint { color: #ccc; }
.dark { color: #444; }
.ribbon { height: 92px; flex: none; display: flex; background: #f5f6f7; border-top: 1px solid #dadbdc; border-bottom: 1px solid #dadbdc; }
.group { flex: none; display: flex; flex-direction: column; border-right: 1px solid #e0e2e5; padding-top: 4px; }
.g-clip { width: 263px; }
.g-clip .gbody { padding-left: 6px; }
.g-org { width: 165px; }
.g-org .gbody { padding-left: 7px; }
.g-new { width: 83px; }
.g-new .gbody { padding-left: 3px; }
.g-open { width: 133px; }
.g-sel { width: 115px; }
.g-sel .gbody { padding-left: 3px; }
.gbody { display: flex; height: 70px; align-items: flex-start; white-space: nowrap; }
.glabel { text-align: center; color: #444; line-height: 16px; }
.big { display: flex; flex-direction: column; align-items: center; line-height: 13px; padding-top: 2px; height: 66px; }
.big > svg:first-child { margin-bottom: 4px; }
.big .car { margin-top: 4px; }
.w-pin { width: 66px; }
.w-std { width: 42px; }
.w-prop { width: 60px; }
.off { color: #777; }
.smalls { display: flex; flex-direction: column; padding-left: 4px; }
.smalls button { height: 22px; display: flex; align-items: center; gap: 3px; }
.smalls svg { width: 16px; height: 16px; }
.smalls .car, .big .car { width: 6px; height: 6px; }
.tall { padding: 4px 0 0; }
.tall button { height: 29px; }
.line { border-left: 1px solid #dfe2e6; margin-left: 8px; padding-left: 5px; }
.address { height: 35px; flex: none; display: flex; align-items: center; padding-right: 12px; gap: 11px; font-size: 12px; }
.arrows { width: 95px; display: flex; align-items: center; padding-left: 12px; gap: 14px; }
.arrows .up { margin-left: -2px; color: #555; transform: rotate(90deg); }
.arrows .flip { transform: rotate(180deg); }
.crumbs { flex: 1; height: 22px; border: 1px solid #d9d9d9; display: flex; align-items: center; gap: 6px; padding-left: 1px; }
.reload { width: 19px; height: 20px; border-left: 1px solid #d9d9d9; color: #555; margin-left: -4px; }
.search { width: 202px; height: 22px; border: 1px solid #d9d9d9; display: flex; align-items: center; padding: 0 8px; color: #666; }
.search input { flex: 1; min-width: 0; border: 0; padding: 0; outline: 0; background: none; }
::placeholder { color: #666; opacity: 1; }
.ex-body { flex: 1; min-height: 0; display: flex; }
.tree { width: 140px; flex: none; overflow: hidden; padding-top: 1px; font-size: 12px; color: #111; }
.tree a { display: flex; align-items: center; height: 24px; padding-left: 40px; gap: 5px; white-space: nowrap; }
.tree .top { padding-left: 32px; }
.tree .cur { background: #d9d9d9; }
.tree svg { width: 16px; height: 16px; }
.vscroll { width: 15px; flex: none; background: #f0f0f0; color: #444; display: flex; flex-direction: column; align-items: center; padding: 4px 0; }
.vscroll div { width: 15px; height: 119px; background: #cdcdcd; margin: 106px 0 auto; }
.files { flex: 1; min-width: 0; display: flex; flex-direction: column; padding: 0 0 0 5px; }
table { border-collapse: collapse; table-layout: fixed; margin: 0 12px auto 14px; color: #6d6d6d; }
.c-name { width: 257px; }
.c-date { width: 144px; }
.c-type { width: 120px; }
th { position: relative; height: 28px; padding: 0 7px; text-align: left; font-weight: 400; color: #4c607a; border-right: 1px solid #e5e5e5; }
th:first-child { padding-left: 3px; }
.sort { position: absolute; left: 50%; top: 0; margin-left: -4px; color: #777; }
td { height: 21px; padding: 0 7px; white-space: nowrap; line-height: 16px; }
td:first-child { padding-left: 24px; color: #111; position: relative; }
td:last-child { text-align: right; padding-right: 4px; }
td > svg { position: absolute; left: 4px; top: 2px; width: 16px; height: 16px; }
.sel { background: #d9d9d9; }
.grp td:first-child { height: 32px; padding: 2px 0 0; text-align: left; }
.grp div { display: flex; align-items: center; gap: 4px; margin: 0 -5px 0 -9px; font-size: 14px; color: #26337a; }
.grp svg { color: #777; }
.grp i { flex: 1; height: 1px; background: #e2e2e2; margin-left: 3px; }
.hscroll { height: 15px; display: flex; align-items: center; background: #f0f0f0; color: #444; padding: 0 3px; }
.hscroll div { flex: 1; height: 15px; background: #cdcdcd; margin: 0 4px; }
.status { height: 24px; flex: none; display: flex; align-items: center; padding-left: 14px; color: #2c3a66; gap: 6px; }
.status span:first-child { margin-right: 15px; }
.view { width: 22px; height: 22px; display: flex; align-items: center; justify-content: center; }
.view + .view { margin: 0 4px 0 -6px; }
.view.on { background: #cce8f6; border: 1px solid #2f9bc9; }

/* Start menu */
.start { position: absolute; left: 0; top: 40px; bottom: 40px; width: 320px; display: flex; background: #1f1f1f; color: #fff; overflow: hidden; box-shadow: 2px 0 8px rgba(0, 0, 0, .35); }
.rail { width: 50px; display: flex; flex-direction: column; padding-top: 5px; }
.rail .bare { height: 48px; flex: none; color: #fff; }
.apps { flex: 1; padding: 7px 20px 0 14px; }
.apps h2 { height: 36px; margin: 0; padding: 2px 0 0 8px; font: inherit; line-height: 37px; }
.apps a { display: flex; align-items: center; gap: 8px; height: 36px; padding-top: 2px; }
.apps svg { width: 24px; height: 24px; }
.apps .exp { width: 10px; height: 10px; margin: 0 1px 0 auto; }
.apps small { display: block; font-size: 12px; color: #999; }

/* Overlay logo */
.watermark { position: absolute; right: 48px; bottom: 44px; display: flex; align-items: center; gap: 4px; font: 32px/40px Roboto, sans-serif; color: rgba(255, 255, 255, .6); text-shadow: 0 0 2px rgba(130, 130, 130, .7); pointer-events: none; }

/* Taskbar */
.taskbar { position: relative; height: 40px; flex: none; display: flex; align-items: center; background: linear-gradient(90deg, #001820, #001320 55%, #000619); color: #fff; }
.winkey { width: 48px; height: 40px; background: #33454e; }
.tasksearch { width: 288px; height: 40px; display: flex; align-items: center; background: #fff; border: 2px solid #0078d7; padding: 0 3px 0 10px; color: #222; }
.tasksearch input { flex: 1; min-width: 0; border: 0; outline: 0; background: none; padding: 0 0 0 10px; font-size: 14px; }
.tasksearch input::placeholder { color: #222; }
.task { width: 49px; height: 40px; }
.run { width: 40px; margin-left: 6px; border-bottom: 3px solid #76b9ed; padding-top: 3px; }
.run + .run { margin-left: 9px; }
.last { margin-left: 5px; }
.tray { display: flex; align-items: center; gap: 8px; }
.clock { width: 68px; text-align: center; line-height: 18px; white-space: nowrap; }
.notif { margin-left: 9px; }
.peek { width: 1px; height: 40px; background: #6b7280; margin: 0 4px 0 19px; }
```
